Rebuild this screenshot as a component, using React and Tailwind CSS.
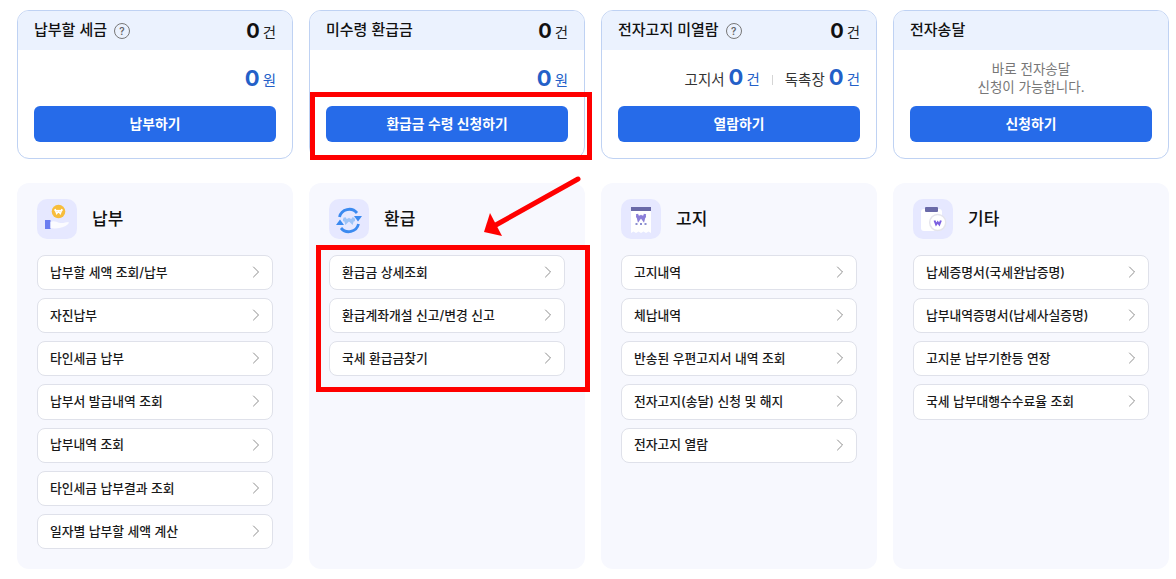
import { ChevronRight } from 'lucide-react';

const FONT = 'font-["Inter","Noto_Sans_CJK_KR",sans-serif]';

const HelpIcon = () => (
  <span className="ml-[7px] flex h-4 w-4 items-center justify-center rounded-full border border-[#777] text-[10px] font-semibold leading-none text-[#666]">?</span>
);

const Count = ({ n, unit, blue }) => (
  <span className="inline-flex items-baseline">
    <span className={`font-bold leading-none ${blue ? 'text-[22px] text-[#2360c8]' : 'text-[20px] text-[#111]'}`}>{n}</span>
    <span className={`ml-[3px] text-[14.5px] leading-none ${blue ? 'text-[#2360c8]' : 'text-[#222]'}`}>{unit}</span>
  </span>
);

function SummaryCard({ title, help, count, action, children }) {
  return (
    <div className="h-[149px] overflow-hidden rounded-[12px] border border-[#bfd2f3] bg-white">
      <div className="flex h-[39px] items-center justify-between bg-[#ebf2fe] pl-4 pr-4">
        <div className="flex items-center">
          <span className="text-[15px] font-medium text-[#111]">{title}</span>
          {help && <HelpIcon />}
        </div>
        {count !== undefined && <Count n={count} unit="건" />}
      </div>
      <div className="flex h-[56px] items-center justify-end pr-4">{children}</div>
      <div className="px-4">
        <button className="h-9 w-full rounded-[6px] bg-[#266be9] text-[13.8px] font-semibold text-white">{action}</button>
      </div>
    </div>
  );
}

const Icon = ({ children }) => (
  <div className="h-10 w-10 shrink-0 rounded-[10px] bg-[#e6e8ff]">
    <svg width="40" height="40" viewBox="0 0 40 40">{children}</svg>
  </div>
);

const PayIcon = () => (
  <Icon>
    <circle cx="21.500" cy="12.500" r="6.800" fill="#f7bd3c" />
    <path d="M18 10l1.700 4.500 1.800-2.300 1.800 2.300 1.700-4.500" fill="none" stroke="#fff" strokeWidth="1.600" />
    <path d="M17.500 11.500h8" stroke="#fff" strokeWidth="1.200" />
    <rect x="8" y="21" width="5.500" height="9" fill="#6a7cf0" />
    <path d="M13.500 23c4-2 7 1 10 1 3 .5 5-1 8-1 1 1-1 3-3 4-4 2-10 3-15 2z" fill="#fbfbff" />
  </Icon>
);

const RefundIcon = () => (
  <Icon>
    <path d="M10.500 18a10 10 0 0 1 17.500-4" fill="none" stroke="#3b8af0" strokeWidth="2.800" />
    <path d="M29.500 25a10 10 0 0 1-17.500 4" fill="none" stroke="#3b8af0" strokeWidth="2.800" />
    <path d="M25 17h8l-4 5.500z" fill="#3b8af0" />
    <path d="M7 26h8l-4-5.500z" fill="#3b8af0" />
    <path d="M15.500 18.500l1.500 5 3-3 3 3 1.500-5" fill="none" stroke="#9dc4f7" strokeWidth="2.600" />
    <path d="M14 21h12" stroke="#9dc4f7" strokeWidth="2.600" />
  </Icon>
);

const NoticeIcon = () => (
  <Icon>
    <path d="M10 11h20v23l-2.500-1.500-2.500 1.500-2.500-1.500-2.500 1.500-2.500-1.500-2.500 1.500-2.500-1.500-2.500 1.500z" fill="#fff" />
    <rect x="10" y="8" width="20" height="4" fill="#6a6aa8" />
    <path d="M16 15l1.500 6 2.500-3.500 2.500 3.500 1.500-6" fill="none" stroke="#8b7fd8" strokeWidth="2.400" />
    <path d="M15 17.500h10" stroke="#8b7fd8" strokeWidth="2" />
    <path d="M14.500 25h2M19 25h2M23.500 25h2" stroke="#8b8fd0" strokeWidth="2" />
  </Icon>
);

const EtcIcon = () => (
  <Icon>
    <rect x="8" y="10" width="21" height="22" rx="3" fill="#fff" />
    <rect x="12" y="8" width="13" height="5" rx="1" fill="#6a6aa8" />
    <circle cx="24.700" cy="23.500" r="8" fill="#fff" stroke="#e4e4ec" strokeWidth="1.500" />
    <path d="M21.500 21.500l1.600 4 1.600-2.300 1.600 2.300 1.600-4" fill="none" stroke="#7b5fe0" strokeWidth="2" />
  </Icon>
);

function MenuPanel({ icon, title, items }) {
  return (
    <div className="h-[386px] rounded-[12px] bg-[#f7f8fe] px-5 pt-4">
      <div className="flex h-10 items-center gap-[15px]">
        {icon}
        <span className="pt-px text-[17px] font-medium text-[#111]">{title}</span>
      </div>
      <ul className="mt-4 flex flex-col gap-2">
        {items.map((item) => (
          <li key={item} className="flex h-[35.13px] items-center justify-between rounded-lg border border-[#dfe1ea] bg-white pl-3 pr-[6px] text-[12.8px] font-medium text-[#1a1a1a]">
            {item}
            <ChevronRight size={20} strokeWidth={1} className="-mt-px text-[#777]" />
          </li>
        ))}
      </ul>
    </div>
  );
}

export default function App() {
  return (
    <div className={`relative h-[579px] w-[1176px] overflow-hidden bg-white ${FONT}`}>
      <div className="grid grid-cols-[repeat(4,276px)] gap-4 pl-[17px] pt-[10px]">
        <SummaryCard title="납부할 세금" help count={0} action="납부하기">
          <Count n={0} unit="원" blue />
        </SummaryCard>
        <SummaryCard title="미수령 환급금" count={0} action="환급금 수령 신청하기">
          <Count n={0} unit="원" blue />
        </SummaryCard>
        <SummaryCard title="전자고지 미열람" help count={0} action="열람하기">
          <div className="flex items-baseline text-[14.5px] text-[#333]">
            <span className="mr-1">고지서</span>
            <Count n={0} unit="건" blue />
            <span className="mx-[12px] h-[10px] w-px bg-[#d5d5d5]" />
            <span className="mr-1">독촉장</span>
            <Count n={0} unit="건" blue />
          </div>
        </SummaryCard>
        <SummaryCard title="전자송달" action="신청하기">
          <p className="w-full pl-4 text-center text-[13.5px] leading-[18px] text-[#777]">
            바로 전자송달
            <br />
            신청이 가능합니다.
          </p>
        </SummaryCard>
      </div>

      <div className="mt-6 grid grid-cols-[repeat(4,276px)] gap-4 pl-[17px]">
        <MenuPanel
          icon={<PayIcon />}
          title="납부"
          items={['납부할 세액 조회/납부', '자진납부', '타인세금 납부', '납부서 발급내역 조회', '납부내역 조회', '타인세금 납부결과 조회', '일자별 납부할 세액 계산']}
        />
        <MenuPanel
          icon={<RefundIcon />}
          title="환급"
          items={['환급금 상세조회', '환급계좌개설 신고/변경 신고', '국세 환급금찾기']}
        />
        <MenuPanel
          icon={<NoticeIcon />}
          title="고지"
          items={['고지내역', '체납내역', '반송된 우편고지서 내역 조회', '전자고지(송달) 신청 및 해지', '전자고지 열람']}
        />
        <MenuPanel
          icon={<EtcIcon />}
          title="기타"
          items={['납세증명서(국세완납증명)', '납부내역증명서(납세사실증명)', '고지분 납부기한등 연장', '국세 납부대행수수료율 조회']}
        />
      </div>

      {/* red annotations on top of the screenshot */}
      <div className="absolute left-[310px] top-[92px] h-[68px] w-[282px] border-[5px] border-[#ff0000]" />
      <div className="absolute left-[316px] top-[245px] h-[147px] w-[274px] border-[5px] border-[#ff0000]" />
      <svg className="absolute left-[480px] top-[174px]" width="104" height="66" viewBox="0 0 104 66">
        <path d="M98 5L14 52" stroke="#ff0000" strokeWidth="5" strokeLinecap="round" />
        <path d="M4 58L10 39L22 62z" fill="#ff0000" />
      </svg>
    </div>
  );
}
